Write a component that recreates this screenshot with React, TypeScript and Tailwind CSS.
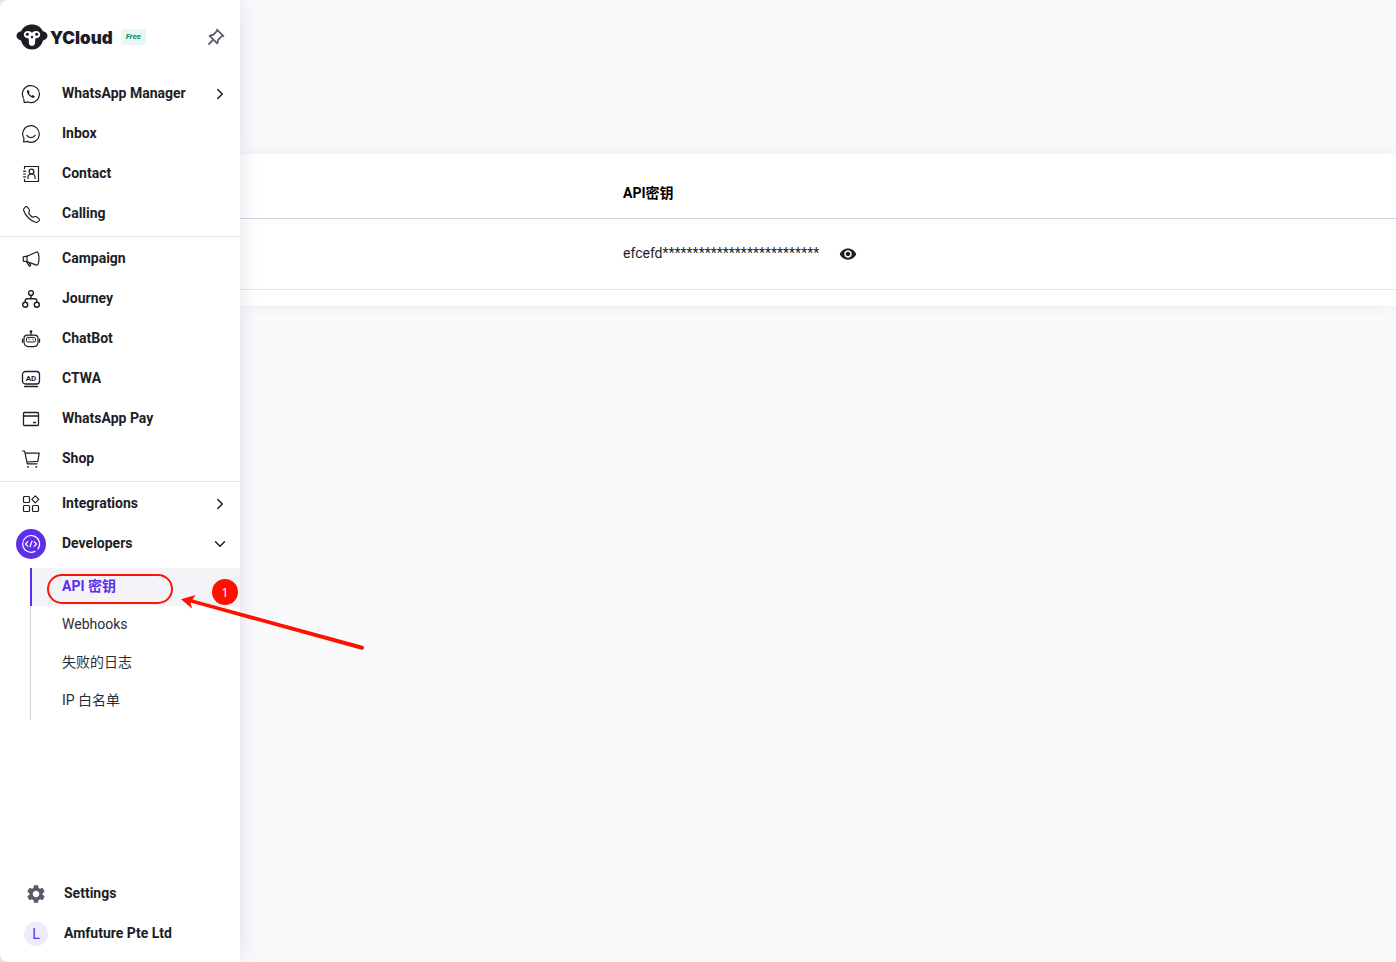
import type { ReactNode } from "react";
import { ChevronDown, ChevronRight } from "lucide-react";
import { BsTelephone } from "react-icons/bs";
import { MdSettings, MdVisibility } from "react-icons/md";
import { RiPushpinLine } from "react-icons/ri";

type NavItem = {
  label: string;
  icon: ReactNode;
  arrow?: "right" | "down";
  active?: boolean;
};

function Icon({ children }: { children: ReactNode }) {
  return (
    <svg
      width="20"
      height="20"
      viewBox="0 0 20 20"
      fill="none"
      stroke="currentColor"
      strokeWidth="1.2"
      strokeLinecap="round"
      strokeLinejoin="round"
      aria-hidden="true"
    >
      {children}
    </svg>
  );
}

const WhatsAppIcon = (
  <Icon>
    <path d="M2.4 14A8.500 8.500 0 1 1 6.400 17.800" />
    <path d="M2.800 15 3.200 18.400h2.600" />
    <path
      d="M7 5.800c-1.100.5-1.300 1.800-.7 3.200 1 2.200 2.600 3.800 4.700 4.600 1.400.500 2.600.1 2.900-1.100l-2.100-1.500-1.200.8c-1.200-.5-2.100-1.400-2.600-2.600l.7-1.200z"
      fill="currentColor"
      stroke="none"
    />
  </Icon>
);

const InboxIcon = (
  <Icon>
    <path d="M3 14.500A8.300 8.300 0 1 1 6.200 17.400L2.600 18z" />
    <path d="M5.800 11.400c1.900 2.900 6.500 2.900 8.400 0" />
  </Icon>
);

const ContactIcon = (
  <Icon>
    <path d="M3.500 4.600V2.500h14v15h-14v-2.100" />
    <path d="M2.600 7.200h2M2.600 10h2M2.600 12.800h2" />
    <circle cx="10.500" cy="7.600" r="2.400" />
    <path d="M7 14.400v-1.200c0-2 1.500-3.200 3.500-3.200s3.500 1.200 3.500 3.200v1.200" />
  </Icon>
);

const CampaignIcon = (
  <Icon>
    <path d="M2.200 7.800 6 7.200v5.400l-3.600-.4z" />
    <path d="M6 7.200 15.600 3c1.600-.5 2.400 2.600 2.400 6.400s-.9 7.100-2.400 6.700L6 12.600" />
    <path d="m5.600 12.900 2.800 4.300 1.300-.8-1.500-2.600" />
  </Icon>
);

const JourneyIcon = (
  <Icon>
    <circle cx="10" cy="4" r="2.400" strokeWidth="1.400" />
    <circle cx="4.200" cy="15.700" r="2.500" strokeWidth="1.400" />
    <circle cx="15.800" cy="15.700" r="2.500" strokeWidth="1.400" />
    <path
      d="M10 6.500v3.200M4.200 13.200v-1.400c0-1.200.8-2 2-2h7.600c1.200 0 2 .8 2 2v1.400"
      strokeWidth="1.400"
    />
  </Icon>
);

const ChatBotIcon = (
  <Icon>
    <circle cx="10" cy="2.600" r=".8" fill="currentColor" />
    <path d="M10 3v3" />
    <path d="M6.300 6.200h7.400c1.900 0 3.300 1.200 3.300 3.100v3.600c0 2.800-1.800 4.700-4.500 4.700h-5C4.800 17.600 3 15.700 3 12.900V9.300c0-1.900 1.400-3.100 3.300-3.100z" />
    <rect x="5.500" y="8.400" width="9" height="4.600" rx="1.200" strokeWidth="1" />
    <path d="M8 10v1M12 10v1" strokeWidth=".8" />
    <path d="M1.500 10.200v3M18.500 10.200v3" strokeWidth="1.300" />
  </Icon>
);

const AdIcon = (
  <Icon>
    <rect x="1.500" y="2.500" width="17" height="12.500" rx="3" strokeWidth="1.300" />
    <path d="M3.500 17.500h13" strokeWidth="1.300" />
    <text
      x="10"
      y="11.600"
      textAnchor="middle"
      fontSize="8"
      fontWeight="700"
      fontFamily="Roboto, sans-serif"
      fill="currentColor"
      stroke="none"
    >
      AD
    </text>
  </Icon>
);

const PayIcon = (
  <Icon>
    <rect x="2.500" y="3.500" width="15" height="13" rx="1" strokeWidth="1.300" />
    <path d="M2.500 7h15M12.600 13.500h2" strokeWidth="1.300" />
  </Icon>
);

const ShopIcon = (
  <Icon>
    <path d="M1.400 2h2.200l2.700 12.800h9.900M4.500 4.200h13.700l-1.400 8.200-10.900.6" />
    <circle cx="7" cy="17.900" r=".9" fill="currentColor" stroke="none" />
    <circle cx="15.300" cy="17.900" r=".9" fill="currentColor" stroke="none" />
  </Icon>
);

const IntegrationsIcon = (
  <Icon>
    <rect x="2.500" y="2.500" width="6" height="6" rx="1" />
    <rect x="2.500" y="11.500" width="6" height="6" rx="1" />
    <rect x="11.500" y="11.500" width="6" height="6" rx="1" />
    <path d="m14.300 1.900 3.500 3.500-3.500 3.500-3.500-3.500z" />
  </Icon>
);

const CodeIcon = (
  <Icon>
    <path d="M17 14.800A8.400 8.400 0 1 0 14 17.400" />
    <path d="M6.800 7.700 4.500 10l2.300 2.300M13.200 7.700l2.300 2.300-2.300 2.300M11 7.200l-2 5.600" />
  </Icon>
);

const groups: NavItem[][] = [
  [
    { label: "WhatsApp Manager", icon: WhatsAppIcon, arrow: "right" },
    { label: "Inbox", icon: InboxIcon },
    { label: "Contact", icon: ContactIcon },
    { label: "Calling", icon: <BsTelephone size={17} /> },
  ],
  [
    { label: "Campaign", icon: CampaignIcon },
    { label: "Journey", icon: JourneyIcon },
    { label: "ChatBot", icon: ChatBotIcon },
    { label: "CTWA", icon: AdIcon },
    { label: "WhatsApp Pay", icon: PayIcon },
    { label: "Shop", icon: ShopIcon },
  ],
  [
    { label: "Integrations", icon: IntegrationsIcon, arrow: "right" },
    { label: "Developers", icon: CodeIcon, arrow: "down", active: true },
  ],
];

const subItems = ["Webhooks", "失败的日志", "IP 白名单"];

function Logo() {
  return (
    <svg width="32" height="26" viewBox="0 0 32 26" aria-hidden="true">
      <path
        d="M16 .4c5 0 9 2.600 10.900 6.800 2.600.4 4.600 2.200 4.600 4.500s-1.900 4.200-4.500 4.700C25.500 22 21.300 25.400 16 25.400S6.500 22 5 16.400C2.400 15.900.5 14 .5 11.700s2-4.100 4.600-4.500C7 3 11 .4 16 .4z"
        fill="#1b1e26"
      />
      <path
        d="M12 7c1.700 0 3.100.7 4 1.900.9-1.200 2.300-1.900 4-1.900 2.500 0 4.200 1.500 4.200 3.600 0 2.200-1.800 3.700-4.800 3.900l-.4 5c-.2 1.600-1.400 2.400-3 2.400s-2.800-.8-3-2.400l-.4-5c-3-.2-4.800-1.700-4.800-3.900C7.800 8.500 9.500 7 12 7z"
        fill="#fff"
      />
      <circle cx="11.300" cy="10.300" r="1.500" fill="#1b1e26" />
      <circle cx="20.700" cy="10.300" r="1.500" fill="#1b1e26" />
      <circle cx="16" cy="13" r="1.200" fill="#1b1e26" />
    </svg>
  );
}

function NavRow({ item }: { item: NavItem }) {
  return (
    <li>
      <button type="button" className="flex h-10 w-full items-center px-4 text-left">
        <span
          className={`flex size-[30px] items-center justify-center rounded-full ${item.active ? "bg-[#5f2eea] text-white" : ""}`}
        >
          {item.icon}
        </span>
        <span className="ml-4 flex-1 pb-0.5 font-bold">{item.label}</span>
        {item.arrow === "right" && <ChevronRight size={18} className="-mr-[5px]" />}
        {item.arrow === "down" && <ChevronDown size={18} className="-mr-[5px]" />}
      </button>
    </li>
  );
}

// Red marks that point at the API key entry
function Callout() {
  return (
    <>
      <span className="pointer-events-none absolute left-[47px] top-1.5 h-[30px] w-[126px] rounded-full border-2 border-[#fa1505]" />
      <span className="absolute left-[212px] top-[11px] flex size-[26px] items-center justify-center rounded-full bg-[#ff1100] font-['Open_Sans',sans-serif] text-[13px] text-white">
        1
      </span>
      <svg
        className="pointer-events-none absolute left-[180px] top-6"
        width="190"
        height="62"
        viewBox="0 0 190 62"
        aria-hidden="true"
      >
        <path d="M1 7.200 15.500 3l-3 4.600 170 46.200a2 2 0 0 1-1 3.900L10.500 10.600l1.500 5.800z" fill="#ff1100" />
      </svg>
    </>
  );
}

function Sidebar() {
  return (
    <aside className="relative z-10 flex w-60 shrink-0 flex-col rounded-l-lg bg-white shadow-[0_0_20px_rgba(80,70,130,0.16)]">
      <div className="flex h-[74px] items-center px-4">
        <Logo />
        <span className="ml-0.5 pt-0.5 font-[Inter,sans-serif] text-[17px] font-black">YCloud</span>
        <span className="ml-2 flex h-4 items-center rounded-xs bg-[#e6f8f2] px-[5px] text-[8px] font-bold italic text-[#088a68]">
          Free
        </span>
        <button type="button" aria-label="Pin sidebar" className="-mr-0.5 ml-auto text-[#5b586b]">
          <RiPushpinLine size={21} />
        </button>
      </div>

      <nav>
        {groups.map((items, index) => (
          <ul key={index} className={index > 0 ? "mt-0.5 border-t border-[#e4e3ec] pt-0.5" : ""}>
            {items.map((item) => (
              <NavRow key={item.label} item={item} />
            ))}
          </ul>
        ))}
        <ul className="mt-1 pl-[30px]">
          <li className="relative -ml-[30px] pl-[30px]">
            <a
              href="#api"
              className="flex h-[38px] items-center border-l-2 border-[#5f2eea] bg-[#f4f3f8] pb-0.5 pl-[30px] font-bold text-[#5f2eea]"
            >
              API 密钥
            </a>
            <Callout />
          </li>
          {subItems.map((label) => (
            <li key={label}>
              <a
                href="#sub"
                className="flex h-[38px] items-center border-l border-[#d4d2e0] pb-0.5 pl-[31px] text-[#2b2d36]"
              >
                {label}
              </a>
            </li>
          ))}
        </ul>
      </nav>

      <div className="mt-auto pb-2">
        <button type="button" className="flex h-10 w-full items-center pl-6 text-left">
          <span className="flex w-6 justify-center text-[#5b586b]">
            <MdSettings size={22} />
          </span>
          <span className="ml-4 pb-0.5 font-bold">Settings</span>
        </button>
        <button type="button" className="flex h-10 w-full items-center pl-6 text-left">
          <span className="flex size-6 items-center justify-center rounded-full bg-[#efeafd] text-[#5f2eea]">L</span>
          <span className="ml-4 pb-0.5 font-bold">Amfuture Pte Ltd</span>
        </button>
      </div>
    </aside>
  );
}

export default function App() {
  return (
    <div className="flex min-h-screen bg-[#ededf0] font-[Roboto,'Noto_Sans_CJK_SC',sans-serif] text-sm text-[#1b1e26]">
      <Sidebar />
      <main className="min-w-0 flex-1 bg-[#fafafd] pt-[154px]">
        <section className="bg-white pb-4 shadow-[0_0_16px_rgba(30,30,50,0.06)]">
          <table className="w-full table-fixed border-collapse text-left">
            <thead>
              <tr className="h-16 border-b border-[#d2d1dc]">
                <th className="w-[367px]" />
                <th className="px-4 pt-3.5 font-bold text-black">API密钥</th>
              </tr>
            </thead>
            <tbody>
              <tr className="h-[71px] border-b border-[#e8e8ec]">
                <td />
                <td className="px-4">
                  <div className="flex items-center">
                    <span className="pb-0.5">efcefd**************************</span>
                    <button type="button" aria-label="Show API key" className="ml-5">
                      <MdVisibility size={18} />
                    </button>
                  </div>
                </td>
              </tr>
            </tbody>
          </table>
        </section>
      </main>
    </div>
  );
}
